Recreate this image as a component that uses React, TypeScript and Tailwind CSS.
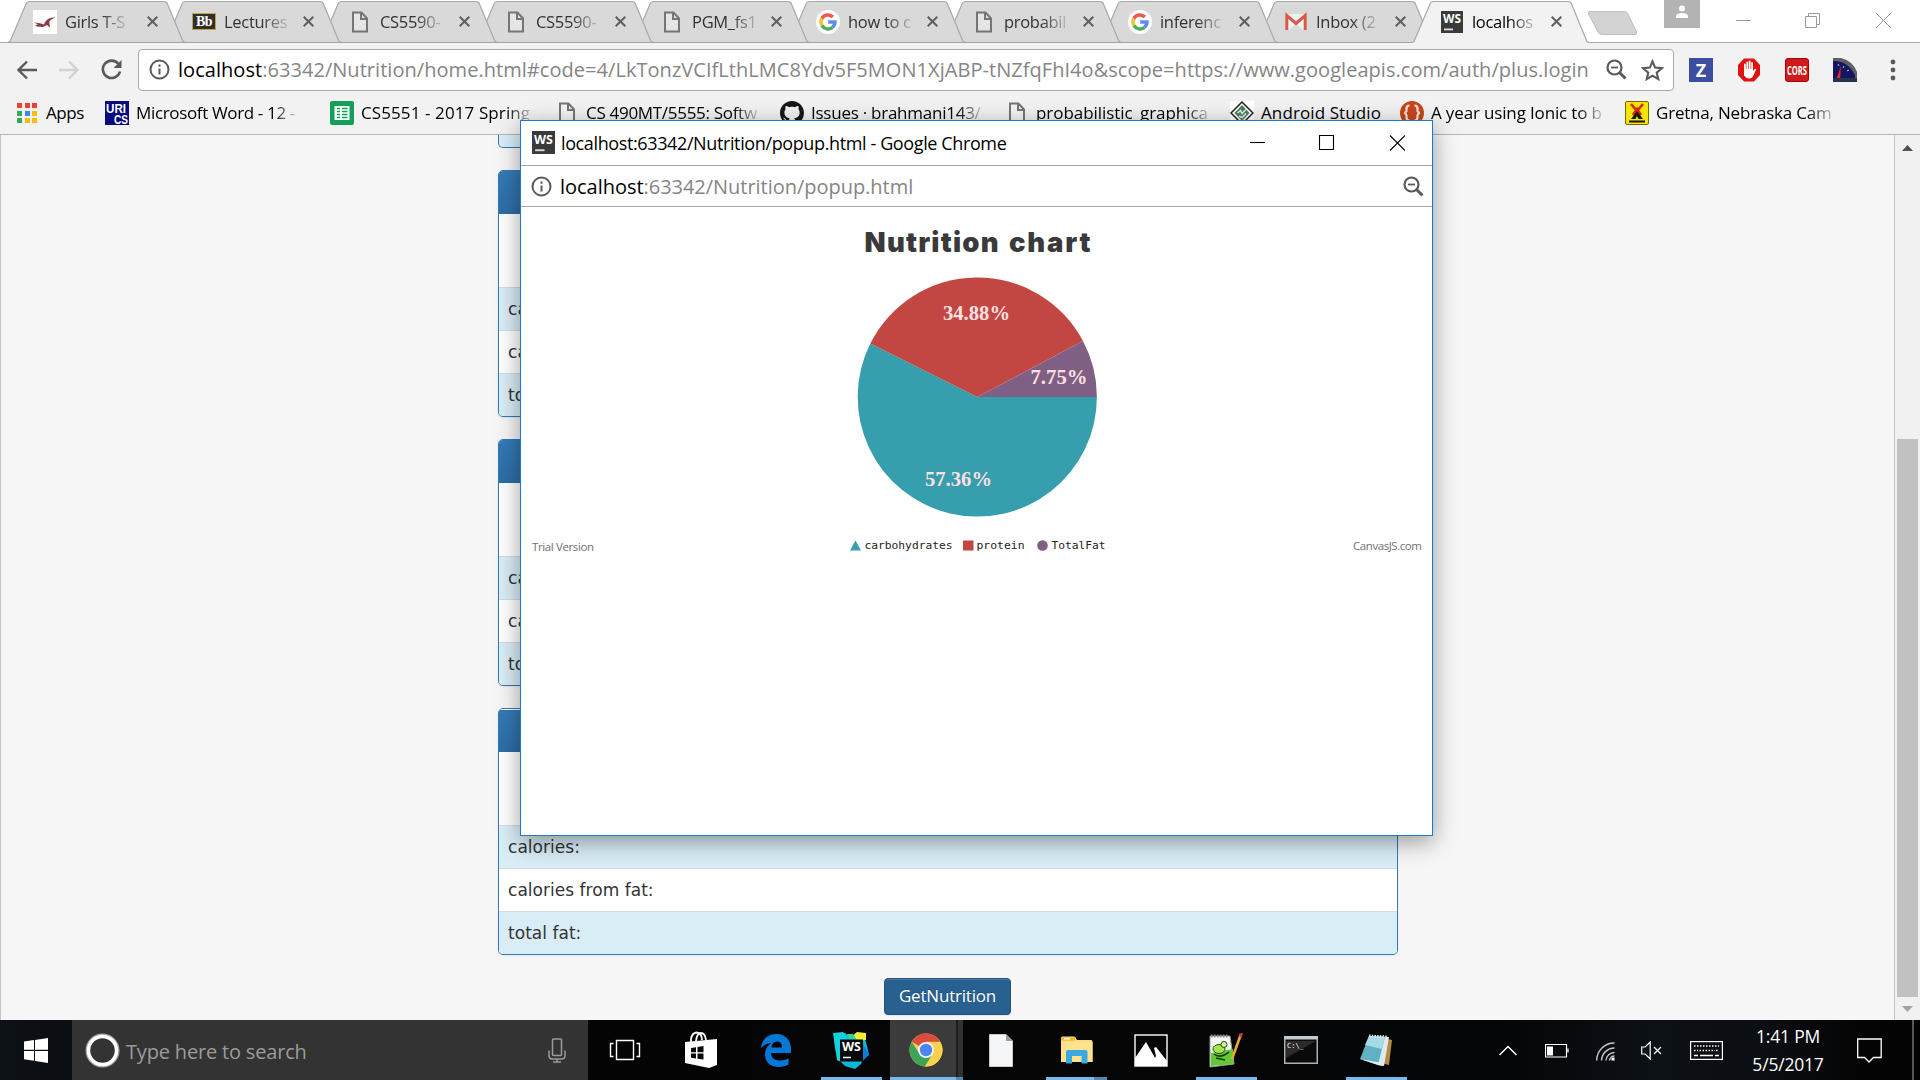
import React from "react";

type IconProps = { className?: string };

function DocIcon({ className = "" }: IconProps) {
  return (
    <svg width="24" height="24" viewBox="0 0 24 24" fill="none" stroke="#757575" strokeWidth="2" className={className}>
      <path d="M5 2.500h8.500l5.500 6v13H5z" fill="#f7f7f7" fillOpacity=".4" />
      <path d="M13 3v6h6" />
    </svg>
  );
}

function GoogleIcon() {
  return (
    <svg width="24" height="24" viewBox="0 0 24 24" fill="none" strokeWidth="3.4">
      <circle cx="12" cy="12" r="12" fill="#fff" />
      <path d="M5.8 8.6A7 7 0 0 1 16.9 7" stroke="#ea5a4d" />
      <path d="M5.9 15.4a7 7 0 0 1-.1-6.8" stroke="#fbc02d" />
      <path d="M16.4 17.4a7 7 0 0 1-10.5-2" stroke="#4cae5c" />
      <path d="M12.2 12H19a7 7 0 0 1-2.6 5.4" stroke="#5b8def" />
    </svg>
  );
}

function BirdIcon() {
  return (
    <svg width="24" height="24" viewBox="0 0 24 24">
      <rect width="24" height="24" fill="#fff" />
      <path d="M1 12.500l6 .8 4 1.200c1-3 3-5.500 6.500-6.500l5-1-4 2.500c-2 1-2.500 2-2 4l.5 4-3-2.500-4 2-6-.5-2-1.500 3-.5z" fill="#8c3b3f" />
    </svg>
  );
}

function BbIcon() {
  return (
    <span className="flex h-[17px] w-6 items-center justify-center border border-[#c9a13b] bg-[#2f2f2f] font-['Liberation_Serif',serif] text-[14px] font-bold leading-none tracking-[-0.5px] text-white">
      Bb
    </span>
  );
}

function GmailIcon() {
  return (
    <svg width="24" height="24" viewBox="0 0 24 24">
      <rect x="1.500" y="4" width="21" height="16" rx="1" fill="#f2f2f2" />
      <path d="M5 20l7-7 7 7z" fill="#dcdcdc" />
      <path d="M2.800 20V5.500L12 13.500l9.200-8V20" fill="none" stroke="#d9584c" strokeWidth="3" />
    </svg>
  );
}

function WsIcon({ size = 22 }: { size?: number }) {
  return (
    <svg width={size} height={size} viewBox="0 0 22 22">
      <rect width="22" height="22" fill="#3a3a3a" />
      <text x="2" y="12" fill="#fff" fontFamily="'Open Sans', sans-serif" fontWeight="700" fontSize="11.500" textLength="18" lengthAdjust="spacingAndGlyphs">WS</text>
      <rect x="3" y="17.500" width="9" height="1.800" fill="#ddd" />
    </svg>
  );
}

type Tab = { title: string; icon: React.ReactNode; active?: boolean };

const tabs: Tab[] = [
  { title: "Girls T-S", icon: <BirdIcon /> },
  { title: "Lectures", icon: <BbIcon /> },
  { title: "CS5590-", icon: <DocIcon /> },
  { title: "CS5590-", icon: <DocIcon /> },
  { title: "PGM_fs1", icon: <DocIcon /> },
  { title: "how to c", icon: <GoogleIcon /> },
  { title: "probabil", icon: <DocIcon /> },
  { title: "inferenc", icon: <GoogleIcon /> },
  { title: "Inbox (2", icon: <GmailIcon /> },
  { title: "localhos", icon: <WsIcon />, active: true },
];

function TabItem({ tab, index }: { tab: Tab; index: number }) {
  return (
    <div className="relative -mr-[21px] h-[43px] w-[177px] shrink-0" style={{ zIndex: tab.active ? 20 : 10 - index }}>
      <svg className="absolute inset-0" width="177" height="43" viewBox="0 0 177 43">
        <path
          d="M0 42.500L2 41.500L18 4Q19 1.500 22 1.500H156Q158.500 1.500 159.500 4L175 41.500L177 42.500V43H0z"
          fill={tab.active ? "#f2f2f2" : "#d9d9d9"}
        />
        <path
          d="M0 42.500L2 41.500L18 4Q19 1.500 22 1.500H156Q158.500 1.500 159.500 4L175 41.500L177 42.500"
          fill="none"
          stroke="#a9a9a9"
          strokeWidth="1.200"
        />
        {!tab.active && <path d="M0 42.500H177" stroke="#a3a3a3" />}
      </svg>
      <div className={`relative flex h-[43px] items-center justify-between pr-[27px] ${index === 0 ? "pl-[25px]" : "pl-[28px]"}`}>
        <span className="flex items-center gap-[8px]">
          <span className="flex w-6 shrink-0 justify-center">{tab.icon}</span>
          <span className={`whitespace-nowrap pt-px text-[16.500px] tracking-[-0.3px] [mask-image:linear-gradient(to_right,black_60%,rgba(0,0,0,0.2)_100%)] ${tab.active ? "text-black" : "text-[#333]"}`}>
            {tab.title}
          </span>
        </span>
        <svg width="11" height="11" viewBox="0 0 11 11" stroke="#5f5f5f" strokeWidth="2">
          <path d="M.7.7l9.600 9.600M10.300.7L.7 10.300" />
        </svg>
      </div>
    </div>
  );
}

function TabStrip() {
  return (
    <div className="flex h-[43px] items-start bg-white pl-2 shadow-[inset_0_-1px_0_#a9a9a9]">
      {tabs.map((t, i) => (
        <TabItem key={i} tab={t} index={i} />
      ))}
      <svg className="ml-[19px] mt-[10px] shrink-0" width="52" height="26" viewBox="0 0 52 26">
        <path d="M3 1.500h34q3 0 4 2.500l8.500 18q1 2.500-2 2.500H15q-3 0-4-2.500L1.500 4q-1-2.500 1.500-2.500z" fill="#d3d3d3" stroke="#bdbdbd" />
      </svg>
      <div className="ml-auto flex">
        <div className="mr-2 flex h-7 w-9 justify-center bg-[#b3b3b3] pt-[5px]">
          <svg width="14" height="14" viewBox="0 0 14 14" fill="#fff">
            <circle cx="7" cy="3.500" r="3" />
            <path d="M1 13V10.500Q2 8 7 8t6 2.500V13z" />
          </svg>
        </div>
        <svg width="210" height="40" viewBox="0 0 210 40" fill="none" stroke="#999" strokeWidth="1">
          <path d="M28 20.500h15" />
          <path d="M97.500 16.500h11v11h-11zM100.500 16V13.500h11v11h-3" />
          <path d="M168 13l15 15M183 13l-15 15" />
        </svg>
        <div className="w-[2px]" />
      </div>
    </div>
  );
}

function InfoIcon() {
  return (
    <svg width="21" height="21" viewBox="0 0 21 21" fill="none" stroke="#5a5a5a" strokeWidth="2">
      <circle cx="10.500" cy="10.500" r="9" />
      <path d="M10.500 9.500v6M10.500 5.500v2.200" />
    </svg>
  );
}

function ZoomOutIcon() {
  return (
    <svg width="21" height="21" viewBox="0 0 21 21" fill="none" stroke="#5a5a5a" strokeWidth="2.200">
      <circle cx="8.500" cy="8.500" r="7" />
      <path d="M5 8.500h7" strokeWidth="1.800" />
      <path d="M13.500 13.500l6 6" strokeWidth="3" />
    </svg>
  );
}

function Toolbar() {
  return (
    <div className="flex h-[50px] items-center bg-[#f2f2f2] pb-px pt-[4px]">
      <svg className="ml-[17px]" width="21" height="20" viewBox="0 0 21 20" fill="none" stroke="#5a5a5a" strokeWidth="2.400">
        <path d="M20 10H2M10 1.500L1.500 10l8.500 8.500" />
      </svg>
      <svg className="ml-[20px]" width="21" height="20" viewBox="0 0 21 20" fill="none" stroke="#d2d2d2" strokeWidth="2.400">
        <path d="M1 10h18M11 1.500l8.500 8.500-8.500 8.500" />
      </svg>
      <svg className="ml-[22px]" width="21" height="21" viewBox="0 0 21 21" fill="none" stroke="#5a5a5a" strokeWidth="2.600">
        <path d="M17.500 5A8.700 8.700 0 1 0 19 12.500" />
        <path d="M20.500 1v8h-8z" fill="#5a5a5a" stroke="none" />
      </svg>
      <div className="ml-[16px] flex h-[42px] w-[1536px] items-center rounded-[4px] border border-[#a9a9a9] bg-white pl-[10px]">
        <InfoIcon />
        <span className="ml-[8px] w-[1419px] whitespace-nowrap text-[20px] tracking-[0.045px] text-[#858585]">
          <span className="text-black">localhost</span>
          :63342/Nutrition/home.html#code=4/LkTonzVCIfLthLMC8Ydv5F5MON1XjABP-tNZfqFhI4o&amp;scope=https://www.googleapis.com/auth/plus.login
        </span>
        <span className="ml-[9px]"><ZoomOutIcon /></span>
        <svg className="ml-[14px]" width="23" height="22" viewBox="0 0 24 23" fill="none" stroke="#5a5a5a" strokeWidth="2.200">
          <path d="M12 2.500l2.700 6.500 7 .6-5.300 4.600 1.600 6.800-6-3.600-6 3.600 1.600-6.800L2.300 9.600l7-.6z" />
        </svg>
      </div>
      <div className="ml-[15px] flex items-center gap-6">
        <span className="flex h-6 w-6 items-center justify-center bg-[#3d4ea0] text-[18px] font-bold leading-none text-white">Z</span>
        <svg width="24" height="24" viewBox="0 0 24 24">
          <path d="M7 0.500h10l6 6.500v10l-6 6.500H7L1 17V7z" fill="#e11212" />
          <path d="M7 12V6.500q0-1 .9-1t.9 1V11h.6V4.500q0-1 .9-1t.9 1V11h.6V3.500q0-1 .9-1t.9 1V11h.6V5q0-1 .9-1t.9 1v8l1.700-2q1-.8 1.500.2l-2.800 6.300q-1.200 3-4.200 3T7 17.500z" fill="#fff" />
        </svg>
        <span className="flex h-6 w-6 items-center justify-center rounded-[3px] border border-[#a00] bg-[#cf1b1b]">
          <svg width="22" height="12" viewBox="0 0 22 12">
            <text x="1" y="10.500" fill="#fff" fontFamily="'Open Sans', sans-serif" fontWeight="700" fontSize="12" textLength="20" lengthAdjust="spacingAndGlyphs">CORS</text>
          </svg>
        </span>
        <svg width="24" height="24" viewBox="0 0 24 24">
          <path d="M0 0h8q12 3 16 14v10H0z" fill="#5d6168" />
          <path d="M0 3q14-1 22 14v5H0z" fill="#16165e" />
          <path d="M5 6l1 2M11 8l-1 2M16 12l-2 1" stroke="#b9c4ff" />
          <path d="M3 22L8 8l-1 14z" fill="#ea2727" />
          <path d="M0 20h24v4H0z" fill="#22354d" />
        </svg>
      </div>
      <svg className="ml-[33px]" width="6" height="24" viewBox="0 0 6 24" fill="#5a5a5a">
        <circle cx="3" cy="4" r="2.400" />
        <circle cx="3" cy="12" r="2.400" />
        <circle cx="3" cy="20" r="2.400" />
      </svg>
    </div>
  );
}

function AppsIcon() {
  const colors = ["#ea4335", "#ea4335", "#ea4335", "#34a853", "#4285f4", "#fbbc05", "#34a853", "#fbbc05", "#fbbc05"];
  return (
    <span className="grid grid-cols-3 gap-[2.500px]">
      {colors.map((c, i) => (
        <span key={i} className="h-[5px] w-[5px]" style={{ backgroundColor: c }} />
      ))}
    </span>
  );
}

const bookmarks: { label: string; icon: React.ReactNode; narrow?: boolean; tracking: string }[] = [
  {
    label: "Microsoft Word - 12 -",
    tracking: "tracking-[-0.35px]",
    icon: (
      <svg width="24" height="24" viewBox="0 0 24 24" fill="#fff" fontFamily="'Liberation Sans', sans-serif" fontWeight="700" fontSize="12">
        <rect width="24" height="24" fill="#0a0a80" />
        <text x="1" y="11.500" textLength="20" lengthAdjust="spacingAndGlyphs">URI</text>
        <text x="9" y="22.500" textLength="14" lengthAdjust="spacingAndGlyphs">CS</text>
      </svg>
    ),
  },
  {
    label: "CS5551 - 2017 Spring",
    tracking: "tracking-[0.1px]",
    icon: (
      <svg width="24" height="24" viewBox="0 0 24 24">
        <rect width="24" height="24" rx="2" fill="#139f59" />
        <path d="M4.500 5h15v14h-15z" fill="#fff" />
        <path d="M7 7.500h3M12 7.500h5.500M7 10.500h3M12 10.500h5.500M7 13.500h3M12 13.500h5.500M7 16.500h3M12 16.500h5.500" stroke="#139f59" strokeWidth="1.600" />
      </svg>
    ),
  },
  { label: "CS 490MT/5555: Softw", icon: <DocIcon />, tracking: "tracking-[-0.3px]" },
  {
    label: "Issues · brahmani143/",
    tracking: "tracking-[-0.25px]",
    icon: (
      <svg width="24" height="24" viewBox="0 0 16 16" fill="#181616">
        <path d="M8 0C3.580 0 0 3.580 0 8c0 3.540 2.290 6.530 5.470 7.590.4.070.55-.17.55-.38 0-.19-.01-.82-.01-1.490-2.010.37-2.530-.49-2.690-.94-.09-.23-.48-.94-.82-1.130-.28-.15-.68-.52-.01-.53.63-.01 1.080.58 1.230.82.72 1.210 1.870.87 2.330.66.070-.52.28-.87.51-1.070-1.780-.2-3.640-.89-3.640-3.950 0-.87.31-1.590.82-2.150-.08-.2-.36-1.020.08-2.120 0 0 .67-.21 2.200.82.64-.18 1.320-.27 2-.27s1.360.09 2 .27c1.530-1.040 2.200-.82 2.200-.82.44 1.100.16 1.920.08 2.120.51.56.82 1.270.82 2.150 0 3.070-1.870 3.750-3.650 3.950.29.25.54.73.54 1.480 0 1.070-.01 1.930-.01 2.200 0 .21.15.46.55.38A8.010 8.010 0 0 0 16 8c0-4.420-3.580-8-8-8z" />
      </svg>
    ),
  },
  { label: "probabilistic_graphica", icon: <DocIcon />, tracking: "tracking-[-0.05px]" },
  {
    label: "Android Studio",
    narrow: true,
    tracking: "tracking-[0.1px]",
    icon: (
      <svg width="24" height="24" viewBox="0 0 24 24">
        <rect width="24" height="24" fill="#fff" />
        <path d="M12 1l11 11-11 11L1 12z" fill="#fff" stroke="#222" strokeWidth="1.500" />
        <path d="M12 4l7.500 8-7.500 8-7.500-8z" fill="#4d8062" />
        <path d="M7.500 12l3-2.500 1.500 3 4-4M9 15l3 1.500 4-4" stroke="#dfeee4" strokeWidth="1.500" fill="none" />
      </svg>
    ),
  },
  {
    label: "A year using Ionic to b",
    tracking: "tracking-[-0.15px]",
    icon: (
      <svg width="24" height="24" viewBox="0 0 24 24">
        <circle cx="12" cy="12" r="12" fill="#c8451b" />
        <path d="M9.500 4.500q-3 0-3 3v2.500l-1.500 2 1.500 2v2.500q0 3 3 3M14.500 4.500q3 0 3 3v2.500l1.500 2-1.500 2v2.500q0 3-3 3" fill="none" stroke="#f7e3dc" strokeWidth="2.200" />
      </svg>
    ),
  },
  {
    label: "Gretna, Nebraska Cam",
    tracking: "tracking-[-0.2px]",
    icon: (
      <svg width="24" height="24" viewBox="0 0 24 24">
        <rect x=".5" y=".5" width="23" height="23" rx="1.500" fill="#f5e400" stroke="#6f6a10" />
        <path d="M6 3l6 7 6-7M8 14l4-6 4 6" fill="none" stroke="#d9261c" strokeWidth="2.600" />
        <path d="M12 10l6 8H6z" fill="#151515" />
        <path d="M4 20.500h16" stroke="#151515" strokeWidth="2" />
        <path d="M10.500 18l1.500-3 1.500 3z" fill="#f5e400" />
      </svg>
    ),
  },
];

function BookmarksBar() {
  return (
    <div className="flex h-[42px] items-start bg-[#f2f2f2] pl-[17px] text-[17px] text-black shadow-[inset_0_-1px_0_#b4b4b4]">
      <div className="mt-[8px] flex h-6 w-[88px] items-center gap-[9px]">
        <AppsIcon />
        <span className="tracking-[-0.4px]">Apps</span>
      </div>
      {bookmarks.map((b) => (
        <div key={b.label} className={`mt-[8px] flex h-6 shrink-0 items-center gap-[7px] ${b.narrow ? "w-[170px]" : "w-[225px]"}`}>
          <span className="w-6 shrink-0">{b.icon}</span>
          <span
            className={`whitespace-nowrap ${b.tracking} ${
              b.narrow ? "" : "[mask-image:linear-gradient(to_right,black_86%,rgba(0,0,0,0.2)_100%)]"
            }`}
          >
            {b.label}
          </span>
        </div>
      ))}
    </div>
  );
}

const rows = ["calories:", "calories from fat:", "total fat:"];

function NutritionPanel({ inset }: { inset?: boolean }) {
  return (
    <div className="h-[247px] w-[900px] overflow-hidden rounded-[5px] border border-[#337ab7] bg-white shadow-[0_1px_2px_rgba(0,0,0,0.08)]">
      <div className={`h-[43px] bg-gradient-to-b from-[#337ab7] to-[#2e6da4] ${inset ? "border-t border-white" : ""}`} />
      <div className="h-[73px]" />
      {rows.map((r, i) => (
        <div
          key={r}
          className={`flex h-[43px] items-center border-t border-[#d9d9de] pl-[9px] pt-[2px] font-['DejaVu_Sans',sans-serif] text-[17px] tracking-[0.03px] text-[#333] ${i === 1 ? "bg-white" : "bg-[#d9edf7]"}`}
        >
          {r}
        </div>
      ))}
    </div>
  );
}

function Page() {
  return (
    <div className="flex h-[885px] bg-[#f6f6f6]">
      <div className="flex flex-1 flex-col items-start overflow-hidden border-l border-r border-[#c4c4c4] pl-[497px]">
        <div className="mb-[22px] h-[13px] w-[900px] shrink-0 rounded-b-[5px] border border-t-0 border-[#337ab7] bg-[#d9edf7]" />
        <div className="flex flex-col gap-[22px]">
          <NutritionPanel />
          <NutritionPanel />
          <NutritionPanel inset />
        </div>
        <button className="ml-[386px] mt-[23px] h-[37px] w-[127px] rounded-[4px] border border-[#245580] bg-[#286090] pb-px text-[17px] tracking-[-0.2px] text-white shadow-[inset_0_1px_0_rgba(255,255,255,0.15),0_1px_1px_rgba(0,0,0,0.075)] [text-shadow:0_-1px_0_rgba(0,0,0,0.2)]">
          GetNutrition
        </button>
      </div>
      <div className="flex w-[25px] flex-col items-center bg-[#f1f1f1]">
        <svg className="mt-[10px]" width="11" height="6" viewBox="0 0 11 6"><path d="M0 6L5.500 0 11 6z" fill="#505050" /></svg>
        <div className="mt-[288px] h-[558px] w-[21px] bg-[#c1c1c1]" />
        <svg className="mt-[9px]" width="11" height="6" viewBox="0 0 11 6"><path d="M0 0l5.500 6L11 0z" fill="#a3a3a3" /></svg>
      </div>
    </div>
  );
}

const slices = [
  { name: "carbohydrates", value: 57.36, color: "#369ead", lx: 958.5, ly: 485.500, w: 67 },
  { name: "protein", value: 34.88, color: "#c24642", lx: 976.500, ly: 320, w: 67 },
  { name: "TotalFat", value: 7.75, color: "#7f6084", lx: 1059, ly: 383.500, w: 57 },
];

function NutritionChart() {
  const cx = 977.3;
  const cy = 397;
  const r = 119.6;
  let angle = 0;
  const paths = slices.map((s) => {
    const end = angle + (s.value / 99.99) * Math.PI * 2;
    const d = `M${cx} ${cy}L${cx + r * Math.cos(angle)} ${cy + r * Math.sin(angle)}A${r} ${r} 0 ${end - angle > Math.PI ? 1 : 0} 1 ${cx + r * Math.cos(end)} ${cy + r * Math.sin(end)}z`;
    angle = end;
    return <path key={s.name} d={d} fill={s.color} />;
  });
  return (
    <svg width="911" height="360" viewBox="521 207 911 360">
      <g fill="#3a3a3a" fontFamily="Inter, 'Liberation Sans', sans-serif" fontWeight="900" fontSize="27.500">
        <text x="864.500" y="252" textLength="134" lengthAdjust="spacing">Nutrition</text>
        <text x="1009" y="252" textLength="81.500" lengthAdjust="spacing">chart</text>
      </g>
      {paths}
      <g fill="#ffe0e0" fontFamily="'Liberation Serif', serif" fontWeight="700" fontSize="21.500" textAnchor="middle">
        {slices.map((s) => (
          <text key={s.name} x={s.lx} y={s.ly} textLength={s.w} lengthAdjust="spacingAndGlyphs">{s.value}%</text>
        ))}
      </g>
      <path d="M850 550.500L855.500 540.500L861 550.500z" fill="#369ead" />
      <rect x="963" y="540.500" width="10.500" height="10" fill="#c24642" />
      <circle cx="1042.500" cy="545.500" r="5.300" fill="#7f6084" />
      <g fill="#222" fontFamily="'DejaVu Sans Mono', monospace" fontSize="11">
        <text x="864.500" y="549" textLength="88" lengthAdjust="spacingAndGlyphs">carbohydrates</text>
        <text x="976.500" y="549" textLength="48" lengthAdjust="spacingAndGlyphs">protein</text>
        <text x="1051.500" y="549" textLength="54" lengthAdjust="spacingAndGlyphs">TotalFat</text>
      </g>
      <g fill="#707070" fontFamily="'Open Sans', sans-serif" fontSize="11.500">
        <text x="532" y="551" textLength="62">Trial Version</text>
        <text x="1353" y="550" textLength="69">CanvasJS.com</text>
      </g>
    </svg>
  );
}

function Popup() {
  return (
    <div className="absolute left-[520px] top-[120px] flex h-[716px] w-[913px] flex-col border border-[#1979ca] bg-white shadow-[0_6px_22px_rgba(0,0,0,0.38)]">
      <div className="flex h-[45px] items-center border-b border-[#a6a6a6] pl-[11px]">
        <span className="-mt-[2px]"><WsIcon size={23} /></span>
        <span className="ml-[6px] whitespace-nowrap text-[18px] tracking-[-0.38px] text-black">localhost:63342/Nutrition/popup.html - Google Chrome</span>
        <svg className="ml-auto mr-[27px]" width="155" height="16" viewBox="0 0 155 16" fill="none" stroke="#000" strokeWidth="1.100">
          <path d="M0 7.500h15" />
          <path d="M69.500.5h14v14h-14z" />
          <path d="M140 .5l15 15M155 .5l-15 15" />
        </svg>
      </div>
      <div className="flex h-[41px] items-center border-b border-[#a6a6a6] pl-[10px] pr-[8px]">
        <InfoIcon />
        <span className="ml-[8px] mt-px text-[20px] tracking-[-0.03px] text-[#858585]">
          <span className="text-black">localhost</span>:63342/Nutrition/popup.html
        </span>
        <span className="ml-auto"><ZoomOutIcon /></span>
      </div>
      <NutritionChart />
    </div>
  );
}

const taskApps: { id: string; icon: React.ReactNode; running?: boolean; stacked?: boolean; focused?: boolean }[] = [
  {
    id: "taskview",
    icon: (
      <svg className="mr-[3px]" width="32" height="22" viewBox="0 0 32 22" fill="none" stroke="#fff" strokeWidth="1.400">
        <path d="M7.500 1.500h17v19h-17zM4.500 4.500h-3v13h3M27.500 4.500h3v13h-3" />
      </svg>
    ),
  },
  {
    id: "store",
    icon: (
      <svg width="34" height="38" viewBox="0 0 34 38">
        <path d="M1 11l32-3v26l-8 3L1 32z" fill="#fff" />
        <path d="M7 12V8q1-6 5.500-6.500Q18 2 18 9M12 10q1-8 5-8t5 7" stroke="#fff" strokeWidth="1.800" fill="none" />
        <path d="M7 17l5-.8v5H7zM13.500 16l6-.9v6.100h-6zM7 22.500h5v5l-5-.7zM13.500 22.500h6v6l-6-.8z" fill="#0a0a0a" />
      </svg>
    ),
  },
  {
    id: "edge",
    icon: (
      <svg width="32" height="34" viewBox="0 0 32 34" fill="#0078d7">
        <path d="M1 15C2 6 8 1 16.500 1 26 1 31 8 31 16v4H11c0 5 4 7.500 9 7.500 3.500 0 6-.8 8.500-2.200v6.200C26 33 22.500 34 18.500 34 10 34 5 28.500 5 21.500c0-5 2.500-9 6.500-11.500C6.500 10.500 3 12.500 1 15zm10.500-.5H22c0-3.500-1.500-6-5-6s-5.200 3-5.500 6z" />
      </svg>
    ),
  },
  {
    id: "webstorm",
    running: true,
    icon: (
      <svg width="37" height="37" viewBox="0 0 37 37">
        <path d="M1 2l11-1 5 4 14 0 2 5 3 13-6 5-2 4-6 5-10-3-6-6-4-12z" fill="#0bb8d8" />
        <path d="M18 5l6-5 9 1 0 7-14 1z" fill="#f3ee3a" />
        <path d="M14 2l6 0 4 6-8 0z" fill="#37d0a0" />
        <path d="M0 1l10-1 5 5-7 25-4-2z" fill="#12d2dc" />
        <path d="M30 12l6 10-6 7z" fill="#0a7fd9" />
        <rect x="7" y="7.500" width="23" height="22" fill="#080808" />
        <text x="9" y="18.500" fill="#fff" fontFamily="'Open Sans', sans-serif" fontWeight="700" fontSize="11.500" textLength="19" lengthAdjust="spacingAndGlyphs">WS</text>
        <path d="M10 25.500h8" stroke="#fff" strokeWidth="1.500" />
      </svg>
    ),
  },
  {
    id: "chrome",
    focused: true,
    running: true,
    stacked: true,
    icon: (
      <svg width="34" height="34" viewBox="0 0 34 34">
        <circle cx="17" cy="17" r="16.500" fill="#fbd24a" />
        <path d="M17 17L2.700 8.750A16.500 16.500 0 0 1 31.300 8.750H17z" fill="#da4c3f" />
        <path d="M2.700 8.750A16.500 16.500 0 0 0 16 33.500l7.500-12L17 17 10 20z" fill="#3ba457" />
        <path d="M17 9h14.400A16.500 16.500 0 0 1 16 33.500l8-13z" fill="#fbd24a" />
        <circle cx="17" cy="17" r="8" fill="#f4f4f4" />
        <circle cx="17" cy="17" r="6.200" fill="#4a86ee" />
      </svg>
    ),
  },
  {
    id: "file",
    icon: (
      <svg width="24" height="33" viewBox="0 0 24 33">
        <path d="M.5.5H17L23.500 7v25.500H.5z" fill="#f5f6f7" stroke="#c9c9c9" />
        <path d="M17 .5V7h6.500z" fill="#9a9a9a" />
      </svg>
    ),
  },
  {
    id: "explorer",
    running: true,
    stacked: true,
    icon: (
      <svg width="33" height="28" viewBox="0 0 33 28">
        <path d="M1 2q0-1.500 1.500-1.500H14q1.500 0 2 2L17 4h14q1.500 0 1.500 1.500V26H1z" fill="#fbdc82" />
        <path d="M1 1.500h14v3H1z" fill="#f2b91f" />
        <path d="M4 2h6v1.500H4z" fill="#eef7fb" />
        <path d="M1 6h31.500v20H1z" fill="#ffe28e" />
        <path d="M6 27.500V16q0-2 2-2h17.500q2 0 2 2v11.500h-6V20h-9.500v7.500z" fill="#39a9e0" />
      </svg>
    ),
  },
  {
    id: "photos",
    icon: (
      <svg width="34" height="33" viewBox="0 0 34 33">
        <rect x="1" y="1" width="32" height="31" fill="#050505" stroke="#fff" strokeWidth="1.400" />
        <path d="M1 24L12 8l8 14 1 2 1-2-2-8 2-1 11 14v5H1z" fill="#fff" />
      </svg>
    ),
  },
  {
    id: "notepadpp",
    running: true,
    icon: (
      <svg width="36" height="35" viewBox="0 0 36 35">
        <path d="M2 3h20l4 28-24 3z" fill="#f3f6ee" stroke="#999" />
        <path d="M3 3h18" stroke="#888" strokeWidth="3" strokeDasharray="1.500 1.500" />
        <path d="M3 20l22-4 1 15-23 2z" fill="#63c835" />
        <ellipse cx="11" cy="16" rx="6" ry="4.500" fill="#a6e34e" stroke="#284f16" />
        <circle cx="16" cy="11.500" r="3" fill="#d7f29a" stroke="#284f16" />
        <path d="M6 21q6 5 15-2M8 25l9 2" stroke="#1d3b10" strokeWidth="1.600" fill="none" />
        <path d="M33 1L24 26" stroke="#e9a83a" strokeWidth="2.600" />
        <path d="M34 0l-1.500 4" stroke="#c33" strokeWidth="2.600" />
      </svg>
    ),
  },
  {
    id: "cmd",
    icon: (
      <svg width="34" height="28" viewBox="0 0 34 28">
        <rect x=".75" y=".75" width="32.500" height="26.500" fill="#0a0a0a" stroke="#a9b0b6" strokeWidth="1.500" />
        <path d="M0 0h34v3.500H0z" fill="#c3c9ce" />
        <path d="M2 5h30L2 22z" fill="#2b2b2b" />
        <text x="3" y="12" fill="#eee" fontSize="7" fontFamily="'DejaVu Sans Mono', monospace">C:\_</text>
      </svg>
    ),
  },
  {
    id: "notepad",
    running: true,
    icon: (
      <svg width="34" height="33" viewBox="0 0 34 33">
        <path d="M25 4l8 2-3 25-8-2z" fill="#b48a45" />
        <path d="M12 2l18 1-5 29-6-1z" fill="#dfe9ec" />
        <path d="M10 2l16 1-7 28L1 25z" fill="#5fb2c4" />
        <path d="M10 2l16 1-3 12L6 11z" fill="#a5dbe4" />
        <path d="M10 2l18 1" stroke="#dfe3e6" strokeWidth="3" strokeDasharray="1.500 1.200" />
        <path d="M1 25l18 6 5 1-1-3z" fill="#e5edf0" />
      </svg>
    ),
  },
];

function Taskbar() {
  return (
    <div className="flex h-[60px] bg-[linear-gradient(to_right,#0c1116_0%,#0b0e12_4%,#040404_32%,#060607_60%,#040506_78%,#0c1116_86%,#0b0e12_92%,#040404_97%)]">
      <div className="flex w-[72px] items-center justify-center">
        <svg width="24" height="25" viewBox="0 0 24 25" fill="#fff">
          <path d="M0 3.500L10 2v9.800H0zM11 1.900L24 0v11.800H11zM0 13h10v9.700l-10-1.500zM11 13h13v12l-13-1.900z" />
        </svg>
      </div>
      <div className="flex w-[516px] items-center bg-[#333] pl-[13px] pr-[22px]">
        <svg width="35" height="35" viewBox="0 0 35 35" fill="none">
          <circle cx="17.500" cy="17.500" r="16" stroke="#a5a5a5" strokeWidth="2" />
          <circle cx="17.500" cy="17.500" r="14" stroke="#fff" strokeWidth="3.500" />
        </svg>
        <span className="ml-[6px] mt-[3px] whitespace-nowrap text-[20px] tracking-[-0.18px] text-[#9b9b9b]">Type here to search</span>
        <svg className="ml-auto" width="18" height="25" viewBox="0 0 18 25" fill="none" stroke="#9b9b9b" strokeWidth="1.500">
          <rect x="4.500" y="1" width="9" height="16.500" rx="1" />
          <path d="M1 12.500v5q0 3.500 3.500 3.500h9q3.500 0 3.500-3.500v-5M9 21v3M5 24h8" />
        </svg>
      </div>
      {taskApps.map((a) => (
        <div key={a.id} className="flex w-[75px] flex-col items-center">
          <div className={`flex h-[57px] w-full flex-1 items-center justify-center pl-px pt-[3px] ${a.focused ? "bg-[linear-gradient(to_right,transparent_2px,#3b3b3b_2px,#3b3b3b_68px,#1d1d1d_68px,#1d1d1d_70px,#313131_70px)]" : ""}`}>
            {a.icon}
          </div>
          {a.running && (
            <div className={`flex h-[3px] ${a.focused ? "ml-[2px] w-[73px]" : "ml-px w-[61px]"}`}>
              <div className="flex-1 bg-[#76b9ed]" />
              {a.stacked && <div className={`bg-[#5487ae] ${a.focused ? "w-[7px]" : "w-[13px]"}`} />}
            </div>
          )}
          {!a.running && <div className="h-[3px]" />}
        </div>
      ))}
      <div className="flex flex-1 items-center">
        <svg className="ml-[86px]" width="18" height="11" viewBox="0 0 18 11" fill="none" stroke="#fff" strokeWidth="1.500"><path d="M.5 10L9 1.500 17.500 10" /></svg>
        <svg className="ml-[28px] mt-[1px]" width="24" height="14" viewBox="0 0 24 14" fill="none" stroke="#fff"><path d="M.5.5h21v12.500H.5zM23 4.500v4" strokeWidth="1.200" /><path d="M2 2.500h6v9H2z" fill="#fff" stroke="none" /></svg>
        <svg className="ml-[27px] mt-[2px]" width="19" height="19" viewBox="0 0 19 19" fill="none" stroke="#c9c9c9" strokeWidth="1.400">
          <path d="M.7 18.500A17.500 17.500 0 0 1 18.500 1M5.500 18.500A13 13 0 0 1 18.500 6M10 18.500a8.500 8.500 0 0 1 8.500-8" /><path d="M13.500 18.500a5 5 0 0 1 5-4.500" />
          <rect x="15.500" y="15.500" width="3" height="3" fill="#fff" stroke="none" />
        </svg>
        <svg className="ml-[26px]" width="21" height="19" viewBox="0 0 21 19" fill="none" stroke="#fff" strokeWidth="1.200">
          <path d="M.7 6h3.500l5-5v17l-5-5H.7zM13 6l7 7M20 6l-7 7" />
        </svg>
        <svg className="ml-[28px]" width="33" height="19" viewBox="0 0 33 19" fill="none" stroke="#fff">
          <rect x=".6" y=".6" width="31.800" height="17.800" strokeWidth="1.200" />
          <path d="M4 5h25" strokeDasharray="1.500 1.500" strokeWidth="1.300" />
          <path d="M4 9.500h4M9.500 9.500H25M26 9.500h3" strokeDasharray="1.500 1.500" strokeWidth="1.300" />
          <path d="M4 14.500h4M10 14.500h13M25 14.500h4" strokeWidth="1.300" />
        </svg>
        <div className="ml-[21px] flex w-[88px] flex-col items-center text-[17.500px] leading-[28px] tracking-[-0.2px] text-white">
          <span>1:41 PM</span>
          <span>5/5/2017</span>
        </div>
        <svg className="ml-[25px]" width="25" height="25" viewBox="0 0 25 25" fill="none" stroke="#fff" strokeWidth="1.300"><path d="M.7 1h23.500v18.500H16.500l-4.500 4.500-4.500-4.500H.7z" /></svg>
        <div className="ml-auto mr-[6px] h-full w-[2px] bg-[#555]" />
      </div>
    </div>
  );
}

export default function App() {
  return (
    <div className="relative flex h-[1080px] w-[1920px] flex-col overflow-hidden font-['Open_Sans','Noto_Sans',sans-serif]">
      <TabStrip />
      <Toolbar />
      <BookmarksBar />
      <Page />
      <Taskbar />
      <Popup />
    </div>
  );
}
